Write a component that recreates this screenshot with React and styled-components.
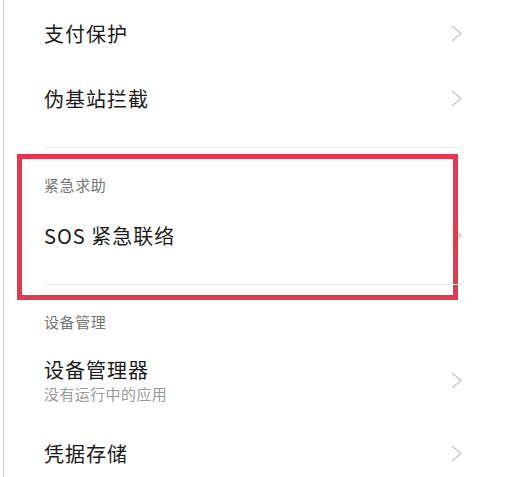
import React from 'react';
import styled, {createGlobalStyle} from 'styled-components';

const GlobalStyle = createGlobalStyle`
  html, body {
    margin: 0;
    padding: 0;
    background: #fff;
  }
  body {
    font-family: "Noto Sans CJK SC", "Noto Sans", sans-serif;
  }
`;

const Page = styled.div`
  width: 504px;
  height: 477px;
  margin-left: 3px;
  overflow: hidden;
  background: #fff;
  box-sizing: border-box;
  border-left: 1px solid #d2d2d2;
`;

const Section = styled.div`
  position: relative;
  margin-top: ${p => (p.$first ? 0 : 1)}px;
  padding-bottom: ${p => (p.$divider ? 18 : 0)}px;
  ${p => p.$divider && `
    &::after {
      content: "";
      position: absolute;
      left: 40px;
      right: 45px;
      bottom: 0;
      height: 1px;
      background: #ececec;
    }
  `}
`;

const Header = styled.div`
  padding: 26px 0 8px 40px;
  font-size: 15px;
  line-height: 20px;
  letter-spacing: 0.6px;
  color: #777;
`;

const Row = styled.div`
  display: flex;
  align-items: center;
  justify-content: space-between;
  box-sizing: border-box;
  min-height: ${p => p.$h || 64}px;
  padding: ${p => (p.$sub ? '17px 45px 17px 40px' : '0 45px 0 40px')};
`;

const Texts = styled.div`
  display: flex;
  flex-direction: column;
  gap: 2px;
`;

const Title = styled.div`
  font-size: 20px;
  line-height: 25px;
  letter-spacing: 1px;
  color: #1b1b1b;
`;

const Sub = styled.div`
  font-size: 15px;
  line-height: 20px;
  letter-spacing: 0.4px;
  color: #9a9a9a;
`;

// red annotation frame drawn over the SOS section
const Highlight = styled.div`
  position: absolute;
  left: 13px;
  top: 5px;
  width: 441px;
  height: 146px;
  box-sizing: border-box;
  border: 5px solid #e2394e;
  pointer-events: none;
`;

const Chevron = () => (
  <svg width="11" height="17" viewBox="0 0 11 17">
    <polyline points="1,1 10,8.5 1,16" fill="none" stroke="#c6c6c6" strokeWidth="1.4" />
  </svg>
);

const Item = ({title, sub, h}) => (
  <Row $h={h} $sub={!!sub}>
    <Texts>
      <Title>{title}</Title>
      {sub && <Sub>{sub}</Sub>}
    </Texts>
    <Chevron />
  </Row>
);

const App = () => (
  <>
    <GlobalStyle />
    <Page>
      <Section $first $divider>
        <Item title="支付保护" h={66} />
        <Item title="伪基站拦截" />
      </Section>
      <Section $divider>
        <Header>紧急求助</Header>
        <Item title="SOS 紧急联络" />
        <Highlight />
      </Section>
      <Section>
        <Header>设备管理</Header>
        <Item title="设备管理器" sub="没有运行中的应用" />
        <Item title="凭据存储" />
      </Section>
    </Page>
  </>
);

export default App;
